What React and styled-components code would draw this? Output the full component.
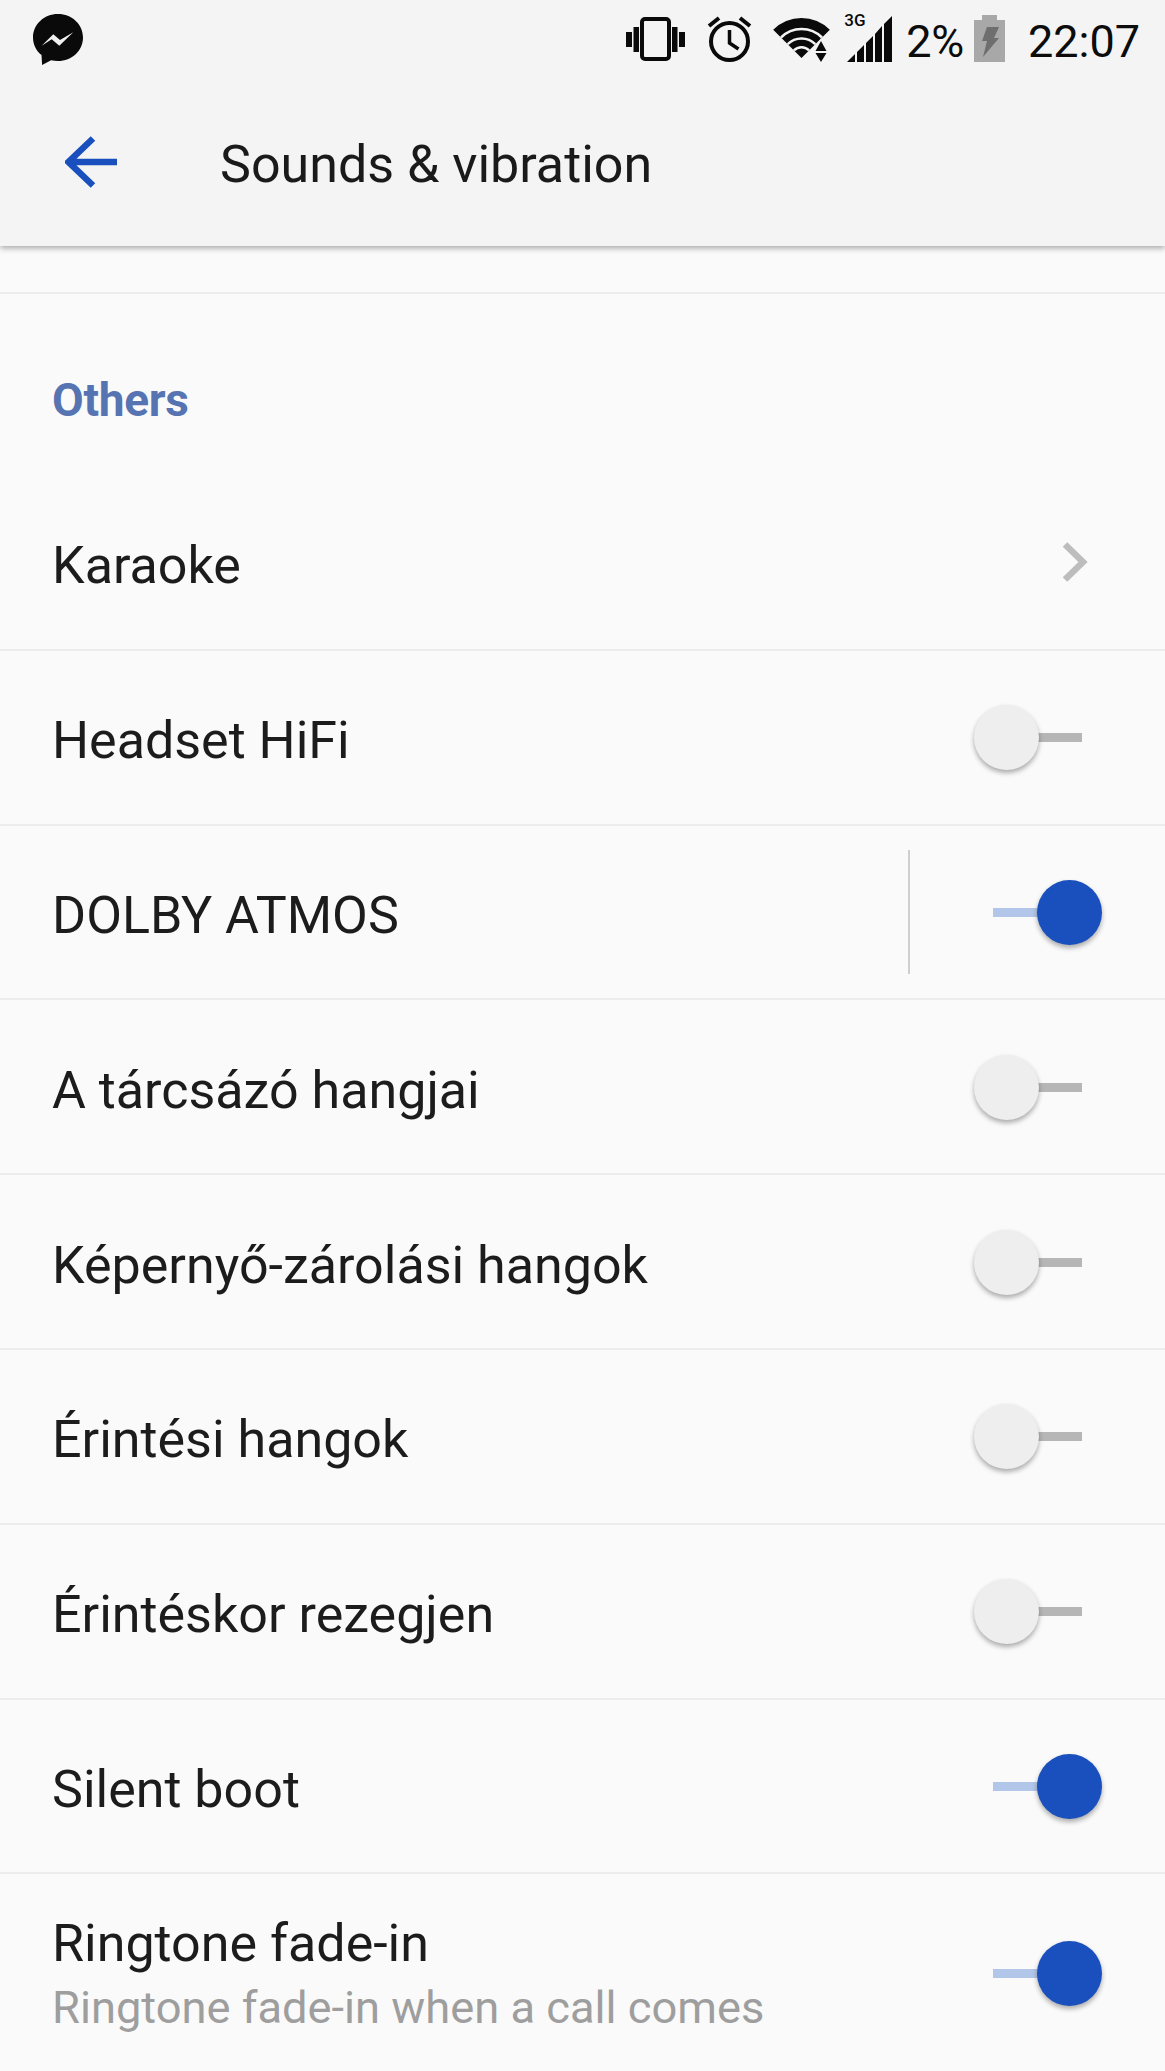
import React from "react";
import styled, { createGlobalStyle } from "styled-components";

const Global = createGlobalStyle`
  html, body { margin: 0; padding: 0; background: #fafafa; }
  body { font-family: Roboto, "Noto Sans", sans-serif; width: 1165px; height: 2071px; overflow: hidden; }
`;
const Page = styled.div`width:1165px;height:2071px;overflow:hidden;background:#fafafa;display:flex;flex-direction:column;`;
const Header = styled.header`height:246px;background:#f4f4f4;box-shadow:0 2px 6px rgba(0,0,0,.35);position:relative;z-index:1;flex:none;display:flex;flex-direction:column;`;
const StatusBar = styled.div`height:80px;flex:none;display:flex;align-items:flex-start;padding:14px 25px 0 33px;box-sizing:border-box;color:#0a0a0a;`;
const StatusRight = styled.div`margin-left:auto;display:flex;align-items:flex-start;height:54px;padding-top:2px;`;
const StatusIcon = styled.svg`display:block;flex:none;margin-left:${p=>p.$ml||0}px;margin-top:${p=>p.$mt||0}px;overflow:visible;`;
const StatusText = styled.span`font-size:${p=>p.$size}px;line-height:54px;margin-left:${p=>p.$ml}px;margin-top:-1px;letter-spacing:${p=>p.$ls||0}px;color:#0c0c0c;white-space:nowrap;`;
const SignalWrap = styled.div`position:relative;flex:none;margin-left:${p=>p.$ml}px;`;
const NetworkTag = styled.span`position:absolute;left:-3px;top:-4px;font-size:17px;line-height:17px;font-weight:500;color:#0a0a0a;white-space:nowrap;`;
const Toolbar = styled.div`flex:1;display:flex;align-items:center;padding:0 0 2px 65px;`;
const BackIcon = styled.svg`display:block;flex:none;`;
const Title = styled.h1`margin:5px 0 0 103px;font-size:52px;font-weight:400;color:#1a1a1a;line-height:60px;`;
const TopGap = styled.div`height:48px;flex:none;border-bottom:2px solid #ececec;box-sizing:border-box;`;
const SectionTitle = styled.div`height:183px;flex:none;padding-top:80px;box-sizing:border-box;font-size:46px;font-weight:700;line-height:52px;letter-spacing:-.3px;color:#5674b2;padding-left:52px;margin-bottom:-1px;`;
const Row = styled.div`height:${p=>p.$tall?198:174.8}px;flex:none;box-sizing:border-box;border-bottom:${p=>p.$tall?"none":"2px solid #ececec"};display:flex;align-items:center;padding:0 0 0 52px;position:relative;`;
const Texts = styled.div`flex:1;min-width:0;display:flex;flex-direction:column;padding-top:${p=>p.$pad}px;`;
const Label = styled.div`font-size:52px;line-height:64px;color:#1c1c1c;white-space:nowrap;`;
const Sub = styled.div`font-size:45.25px;line-height:64px;color:#9e9e9e;white-space:nowrap;`;
const Trailing = styled.div`width:224px;height:100%;flex:none;display:flex;align-items:center;position:relative;`;
const Divider = styled.div`position:absolute;left:-33px;top:24px;bottom:24px;width:1.5px;background:#cfcfcf;`;
const Switch = styled.div`position:relative;width:224px;height:70px;`;
const Track = styled.div`position:absolute;top:31px;height:9px;left:${p=>p.$on?"52px":"90px"};width:${p=>p.$on?"50px":"51px"};background:${p=>p.$on?"#b2c6e9":"#b6b6b6"};`;
const Thumb = styled.div`position:absolute;top:3px;left:${p=>p.$on?"96px":"33px"};width:65px;height:65px;border-radius:50%;background:${p=>p.$on?"#1a50bd":"#eeeeee"};box-shadow:0 3px 5px rgba(0,0,0,.32);`;
const Chevron = styled.svg`display:block;margin-left:121px;`;

const Tog = ({ on }) => (
  <Switch>
    <Track $on={on} />
    <Thumb $on={on} />
  </Switch>
);

const rows = [
  { label: "Karaoke", kind: "chev" },
  { label: "Headset HiFi", on: false },
  { label: "DOLBY ATMOS", on: true, div: true },
  { label: "A tárcsázó hangjai", on: false },
  { label: "Képernyő-zárolási hangok", on: false },
  { label: "Érintési hangok", on: false },
  { label: "Érintéskor rezegjen", on: false },
  { label: "Silent boot", on: true },
  { label: "Ringtone fade-in", sub: "Ringtone fade-in when a call comes", on: true },
];

export default function App() {
  return (
    <Page>
      <Global />
      <Header>
        <StatusBar>
          <StatusIcon width="50" height="52" viewBox="0 0 50 52">
            <path fill="#0a0a0a" d="M25 0C11 0 0 10.500 0 23.500 0 31 3.500 37 8.500 41l.6 10 9-4.800c2.200.5 4.500.8 6.900.8 14 0 25-10.500 25-23.500S39 0 25 0z" />
            <path fill="#f0f0f0" d="M8.700 31.700 20.300 20.300 27 26 40.300 18.300 26.300 31.700 18.700 25.300z" />
          </StatusIcon>
          <StatusRight>
            <StatusIcon width="59" height="44" viewBox="0 0 59 44" $mt={1}>
              <rect x="16" y="2" width="27" height="40" rx="3" fill="none" stroke="#0a0a0a" strokeWidth="4" />
              <path fill="#0a0a0a" d="M0 15h6v15H0zM7.500 10h5.500v25H7.500zM46 10h5.500v25H46zM53 15h6v15h-6z" />
            </StatusIcon>
            <StatusIcon width="45" height="46" viewBox="0 0 45 46" $ml={22}>
              <circle cx="22.500" cy="25.500" r="18.500" fill="none" stroke="#0a0a0a" strokeWidth="4" />
              <path d="M22.500 14v13l9 6" fill="none" stroke="#0a0a0a" strokeWidth="3.500" />
              <path d="M12 2 2 10M33 2 43 10" fill="none" stroke="#0a0a0a" strokeWidth="4" />
            </StatusIcon>
            <StatusIcon width="57" height="46" viewBox="0 0 57 46" $ml={21}>
              <path fill="#0a0a0a" d="M0.200 13.700A40 40 0 0 1 56.800 13.700L28.500 42z" />
              <path d="M8 21.500A29 29 0 0 1 49 21.500M14.700 28.200A19.500 19.500 0 0 1 42.300 28.200M20.900 34.400A10.700 10.700 0 0 1 36.100 34.400" fill="none" stroke="#f4f4f4" strokeWidth="2.500" />
              <path fill="#0a0a0a" stroke="#f4f4f4" strokeWidth="3" paintOrder="stroke" d="M48 25 53.500 35H42.500zM42.500 37H53.500L48 46z" />
            </StatusIcon>
            <SignalWrap $ml={17}>
              <StatusIcon width="45" height="46" viewBox="0 0 45 46">
                <path fill="#0a0a0a" d="M0 46 8 38V46zM10 36 17 29V46H10zM19 27 26 20V46H19zM28 18 35 10V46H28zM37 8 45 0V46H37z" />
              </StatusIcon>
              <NetworkTag>3G</NetworkTag>
            </SignalWrap>
            <StatusText $size={45} $ml={14} $ls={-.3}>2%</StatusText>
            <StatusIcon width="31" height="47" viewBox="0 0 31 47" $ml={10} $mt={-1}>
              <path fill="#a8a8a8" d="M8 0h15v5h8v42H0V5h8z" />
              <path fill="#6e6e6e" d="M13 12h12l-5 11h5L9 42l4-16H8z" />
            </StatusIcon>
            <StatusText $size={45} $ml={23}>22:07</StatusText>
          </StatusRight>
        </StatusBar>
        <Toolbar>
          <BackIcon width="52" height="52" viewBox="0 0 52 52">
            <path d="M52 26H4M28 2.500 3.500 26 28 49.500" fill="none" stroke="#1a50bd" strokeWidth="6.500" />
          </BackIcon>
          <Title>Sounds &amp; vibration</Title>
        </Toolbar>
      </Header>
      <TopGap />
      <SectionTitle>Others</SectionTitle>
      {rows.map((r) => (
        <Row key={r.label} $tall={!!r.sub}>
          <Texts $pad={r.sub ? 5 : 8}>
            <Label>{r.label}</Label>
            {r.sub && <Sub>{r.sub}</Sub>}
          </Texts>
          <Trailing>
            {r.div && <Divider />}
            {r.kind === "chev" ? (
              <Chevron width="26" height="40" viewBox="0 0 26 40">
                <path d="M3 2.500 21 20 3 37.500" fill="none" stroke="#bdbdbd" strokeWidth="6.500" />
              </Chevron>
            ) : (
              <Tog on={r.on} />
            )}
          </Trailing>
        </Row>
      ))}
    </Page>
  );
}
